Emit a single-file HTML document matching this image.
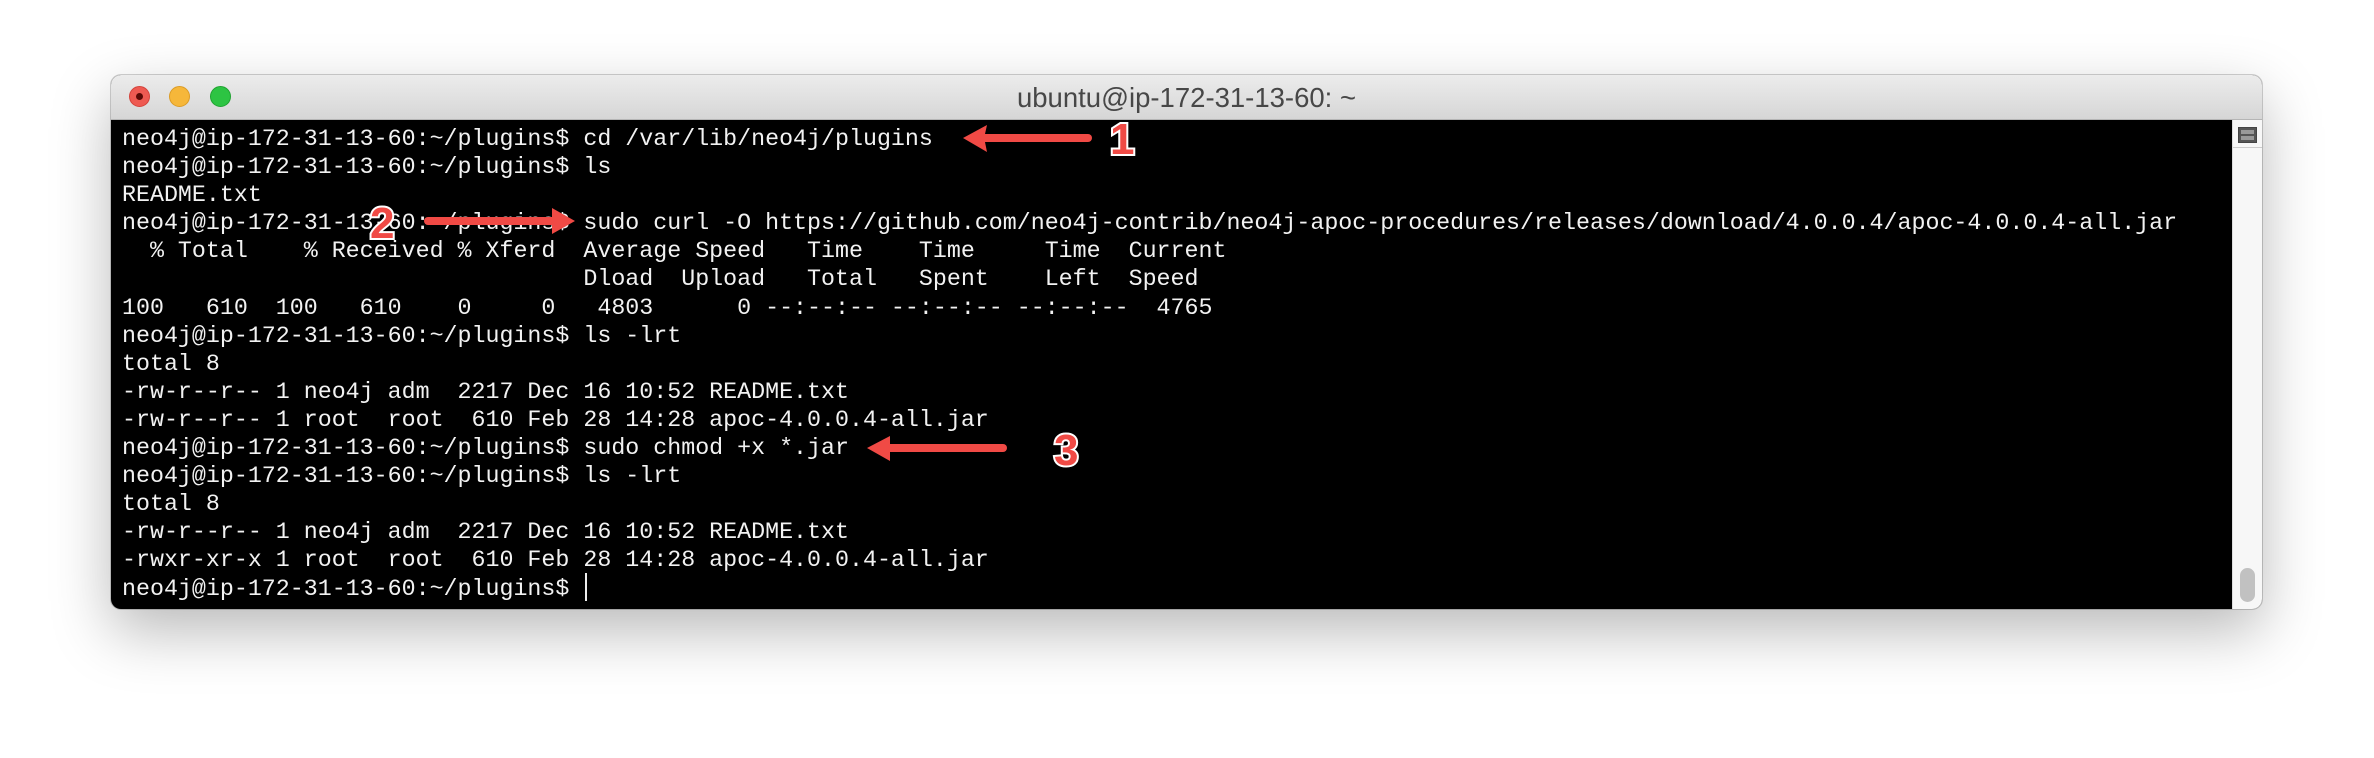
<!DOCTYPE html>
<html><head><meta charset="utf-8"><style>
html,body{margin:0;padding:0;width:2374px;height:758px;background:#fff;overflow:hidden;position:relative}
.win{position:absolute;left:111px;top:75px;width:2151px;height:534px;border-radius:10px;background:#000;box-shadow:0 22px 60px rgba(0,0,0,0.28),0 0 0 1px rgba(0,0,0,0.18);overflow:hidden}
.tb{position:absolute;left:0;top:0;width:100%;height:44px;background:linear-gradient(#ececec,#d6d6d6);border-bottom:1px solid #b5b5b5}
.tl{position:absolute;top:11px;width:21px;height:21px;border-radius:50%;box-sizing:border-box}
.title{position:absolute;left:0;right:0;top:7px;text-align:center;font:27.5px "Liberation Sans",sans-serif;color:#474747}
.sb{position:absolute;right:0;top:45px;width:29px;bottom:0;background:#f7f7f7;border-left:1px solid #ddd}
.term{position:absolute;left:11px;top:50px;font:23.3px/28.1px "Liberation Mono",monospace;color:#f2f2f2;white-space:pre;margin:0}
svg{position:absolute;left:0;top:0}
.num{font:bold 44px "Liberation Sans",sans-serif;fill:#f04a45;stroke:#fff;stroke-width:4px;paint-order:stroke}
</style></head><body>
<div class="win">
<div class="tb">
<div class="tl" style="left:18px;background:#ee5a52;border:1px solid #d4433b"><div style="position:absolute;left:6px;top:6px;width:7px;height:7px;border-radius:50%;background:#5a0a06"></div></div>
<div class="tl" style="left:58px;background:#f6b73a;border:1px solid #dc9c26"></div>
<div class="tl" style="left:99px;background:#2dc443;border:1px solid #20a331"></div>
<div class="title">ubuntu@ip-172-31-13-60: ~</div>
</div>
<div class="sb">
<div style="position:absolute;left:5px;top:7px;width:17px;height:14px;background:#555;border:1px solid #444"><div style="position:absolute;left:2px;top:2px;width:13px;height:4px;background:#999"></div><div style="position:absolute;left:2px;top:8px;width:13px;height:4px;background:#999"></div></div>
<div style="position:absolute;left:0;top:27px;width:29px;border-top:1px solid #ccc"></div>
<div style="position:absolute;left:7px;top:448px;width:15px;height:34px;border-radius:8px;background:#c1c1c1"></div>
</div>
<pre class="term">neo4j@ip-172-31-13-60:~/plugins$ cd /var/lib/neo4j/plugins
neo4j@ip-172-31-13-60:~/plugins$ ls
README.txt
neo4j@ip-172-31-13-60:~/plugins$ sudo curl -O https://github.com/neo4j-contrib/neo4j-apoc-procedures/releases/download/4.0.0.4/apoc-4.0.0.4-all.jar
  % Total    % Received % Xferd  Average Speed   Time    Time     Time  Current
                                 Dload  Upload   Total   Spent    Left  Speed
100   610  100   610    0     0   4803      0 --:--:-- --:--:-- --:--:--  4765
neo4j@ip-172-31-13-60:~/plugins$ ls -lrt
total 8
-rw-r--r-- 1 neo4j adm  2217 Dec 16 10:52 README.txt
-rw-r--r-- 1 root  root  610 Feb 28 14:28 apoc-4.0.0.4-all.jar
neo4j@ip-172-31-13-60:~/plugins$ sudo chmod +x *.jar
neo4j@ip-172-31-13-60:~/plugins$ ls -lrt
total 8
-rw-r--r-- 1 neo4j adm  2217 Dec 16 10:52 README.txt
-rwxr-xr-x 1 root  root  610 Feb 28 14:28 apoc-4.0.0.4-all.jar
neo4j@ip-172-31-13-60:~/plugins$ </pre>
<div style="position:absolute;left:474px;top:498px;width:2px;height:28px;background:#eee"></div>
</div>
<svg width="2374" height="758">
<g fill="#f04a45" stroke="none">
<path d="M1088 134 L985 134 L987 125 L963 138 L987 152 L985 142 L1088 142 Z"/>
<circle cx="1088" cy="138" r="4"/>
<path d="M1003 444 L890 444 L890 436 L867 448 L890 461 L890 452 L1003 452 Z"/>
<circle cx="1003" cy="448" r="4"/>
<path d="M428 217 L552 217 L552 208 L575 221 L552 234 L552 225 L428 225 Z"/>
<circle cx="428" cy="221" r="4"/>
</g>
<text class="num" x="1110" y="154">1</text>
<text class="num" x="1054" y="465">3</text>
<text class="num" x="370" y="238">2</text>
</svg>
</body></html>
